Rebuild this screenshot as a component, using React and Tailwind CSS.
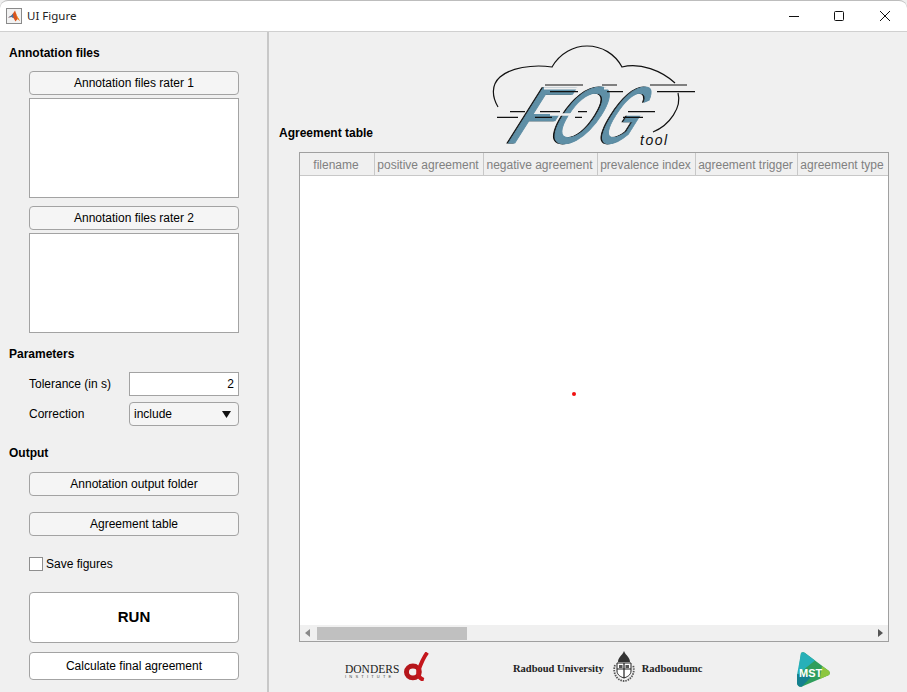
import React from "react";

const btn =
  "flex items-center justify-center w-[210px] ml-[29px] rounded-[4px] border border-[#a3a3a3] text-[12px] text-black";

const columns = [
  { name: "filename", w: "w-[75px]" },
  { name: "positive agreement", w: "w-[109px]" },
  { name: "negative agreement", w: "w-[114px]" },
  { name: "prevalence index", w: "w-[98px]" },
  { name: "agreement trigger", w: "w-[102px]" },
  { name: "agreement type", w: "flex-1" },
];

const MatlabIcon = () => (
  <svg width="16" height="16" viewBox="0 0 16 16">
    <rect x="0.5" y="0.5" width="15" height="15" fill="#f2f2f2" stroke="#8a8a8a" />
    <path d="M2 9.5 L5.5 7.5 L7 5.5 L9 2.5 L11 8 L14 13 L11.5 11 L9.5 13.5 L7.5 10 L5.5 9 Z" fill="#d9541e" />
    <path d="M2 9.5 L5.5 7.5 L7 5.5 L7.5 10 L5.5 9 Z" fill="#3b73a8" />
    <path d="M9 2.5 L11 8 L14 13 L11.5 11 Z" fill="#f09a2a" />
  </svg>
);

const WindowButtons = () => (
  <div className="flex items-center pr-[17px]">
    <svg width="10" height="10" viewBox="0 0 10 10">
      <path d="M0 5.5 H10" stroke="#111" strokeWidth="1" />
    </svg>
    <svg className="ml-[35px]" width="10" height="10" viewBox="0 0 10 10">
      <rect x="0.5" y="0.5" width="9" height="9" rx="1" fill="none" stroke="#111" />
    </svg>
    <svg className="ml-[36px]" width="10" height="10" viewBox="0 0 10 10">
      <path d="M0 0 L10 10 M10 0 L0 10" stroke="#111" strokeWidth="1" />
    </svg>
  </div>
);

const fogFont = '"Liberation Sans", sans-serif';

const FogLetter = ({ ch, sx, x }) => (
  <g fontFamily={fogFont} fontSize="80" strokeWidth="1.2">
    <text transform={`matrix(${sx} 0 -0.63 1 ${x - 1.4} 98)`} fill="#111" stroke="#111">
      {ch}
    </text>
    <text transform={`matrix(${sx} 0 -0.63 1 ${x} 98)`} fill="#5f8fa6" stroke="#5f8fa6">
      {ch}
    </text>
  </g>
);

const FogLogo = () => (
  <svg width="210" height="106" viewBox="0 0 210 106">
    <path
      d="M8 62 C2 52 1 40 10 32 C20 23 42 19 62 22 C70 8 84 1 97 1 C112 1 125 9 132 22 C150 17 172 26 185 38"
      fill="none"
      stroke="#111"
      strokeWidth="1.2"
    />
    <path d="M188 48 C192 62 180 80 163 87" fill="none" stroke="#111" strokeWidth="1.2" />
    <FogLetter ch="F" sx={0.85} x={13} />
    <FogLetter ch="O" sx={0.7} x={53} />
    <FogLetter ch="G" sx={0.55} x={102} />
    {/* bands where the speed lines cut through the letters */}
    <g stroke="#f0f0f0" strokeWidth="2.4">
      <path d="M54 43.4 H92 M114 43.4 H132 M60 69.5 H92 M90 69.5 H98 M134 69.5 H165" />
    </g>
    <g stroke="#111" strokeWidth="1.2">
      <path d="M55 40 H93 M60 46.7 H88 M112 40 H127 M117 46.7 H133 M160 40 H197 M167 46.7 H205" />
      <path d="M20 66.7 H35 M50 66.7 H70 M88 66.7 H97 M138 66.7 H165 M7 72.3 H28 M45 72.3 H62 M85 72.3 H92 M133 72.3 H153" />
    </g>
    <text x="150" y="100" fontSize="14" fontStyle="italic" letterSpacing="1.5" fontFamily={fogFont} fill="#111">
      tool
    </text>
  </svg>
);

const Crest = () => (
  <svg width="24" height="32" viewBox="0 0 24 32">
    <path d="M3 15 C0 24 6 31 12 31 C18 31 24 24 21 15" fill="none" stroke="#555" strokeWidth="1.8" strokeDasharray="1.5 1" />
    <path d="M5 13 H19 V21 C19 25 15 27 12 28 C9 27 5 25 5 21 Z" fill="#fff" stroke="#222" />
    <path d="M12 13 V28 M5 19 H19" stroke="#222" strokeWidth="1.2" />
    <path d="M6 12 C6 7 10 6 12 1 C14 6 18 7 18 12 Z" fill="#333" />
    <rect x="7" y="15" width="3.5" height="3" fill="#555" />
    <rect x="13.5" y="15" width="3.5" height="3" fill="#555" />
  </svg>
);

const DondersMark = () => (
  <svg width="26" height="29" viewBox="0 0 26 29">
    <ellipse cx="9" cy="20" rx="6.5" ry="6" fill="none" stroke="#b5161b" strokeWidth="5" />
    <path d="M23.5 0.5 C20 5 17 12 14.5 19 C14 24 16 27 20 28" fill="none" stroke="#c4161c" strokeWidth="4" />
  </svg>
);

const MstLogo = () => (
  <svg width="34" height="35" viewBox="0 0 34 35">
    <path d="M5 1 C6 0 8 0 9 1 L33 19 C34 20 34 22 33 23 L6 34.5 C3 35.5 1 33 1 31 Z" fill="#2f9e5c" />
    <path d="M5 1 C6 0 8 0 9 1 L19 8.5 L1 23 Z" fill="#27b0b8" />
    <path d="M1 22 L16 24 L6 34.5 C3 35.5 1 33 1 31 Z" fill="#14808f" />
    <path d="M26 14 L33 19 C34 20 34 22 33 23 L24 27 Z" fill="#8cc63f" />
    <text x="3" y="25" fontSize="11" fontWeight="700" fontFamily={fogFont} fill="#fff">
      MST
    </text>
  </svg>
);

const App = () => {
  return (
    <div
      className="w-[907px] h-[692px] overflow-hidden flex flex-col bg-[#f0f0f0] text-[12px] text-black"
      style={{ fontFamily: '"Liberation Sans", Arial, sans-serif' }}
    >
      {/* title bar */}
      <div className="h-[32px] shrink-0 flex items-center justify-between bg-white border-t border-b border-t-[#bdbdbd] border-b-[#d0d0d0] rounded-t-[8px]">
        <div className="flex items-center pl-[6px] gap-[5px]">
          <MatlabIcon />
          <span className="text-[11.5px] text-[#222]" style={{ fontFamily: '"Noto Sans", sans-serif' }}>
            UI Figure
          </span>
        </div>
        <WindowButtons />
      </div>

      <div className="flex flex-1 min-h-0">
        {/* left panel */}
        <div className="w-[267px] shrink-0 flex flex-col">
          <div className="h-[14px] mt-[14px] ml-[9px] font-bold leading-[14px]">Annotation files</div>
          <div className={`${btn} h-[24px] mt-[11px] bg-[#f5f5f5]`}>Annotation files rater 1</div>
          <div className="h-[100px] w-[210px] ml-[29px] mt-[3px] bg-white border border-[#a3a3a3]" />
          <div className={`${btn} h-[24px] mt-[8px] bg-[#f5f5f5]`}>Annotation files rater 2</div>
          <div className="h-[100px] w-[210px] ml-[29px] mt-[3px] bg-white border border-[#a3a3a3]" />

          <div className="h-[14px] mt-[14px] ml-[9px] font-bold leading-[14px]">Parameters</div>
          <div className="flex items-center h-[24px] mt-[11px] ml-[29px] w-[210px]">
            <span className="w-[100px]">Tolerance (in s)</span>
            <div className="w-[110px] h-full bg-white border border-[#a3a3a3] flex items-center justify-end pr-[4px]">
              2
            </div>
          </div>
          <div className="flex items-center h-[24px] mt-[6px] ml-[29px] w-[210px]">
            <span className="w-[100px]">Correction</span>
            <div className="w-[110px] h-full bg-[#f5f5f5] border border-[#a3a3a3] rounded-[4px] flex items-center justify-between pl-[4px] pr-[7px]">
              <span>include</span>
              <svg width="9" height="7" viewBox="0 0 9 7">
                <path d="M0 0 H9 L4.5 7 Z" fill="#111" />
              </svg>
            </div>
          </div>

          <div className="h-[14px] mt-[20px] ml-[9px] font-bold leading-[14px]">Output</div>
          <div className={`${btn} h-[24px] mt-[12px] bg-[#f5f5f5]`}>Annotation output folder</div>
          <div className={`${btn} h-[24px] mt-[16px] bg-[#f5f5f5]`}>Agreement table</div>

          <div className="flex items-center h-[14px] mt-[21px] ml-[29px]">
            <div className="w-[14px] h-[14px] bg-white border border-[#8f8f8f]" />
            <span className="ml-[3px]">Save figures</span>
          </div>

          <div className={`${btn} h-[51px] mt-[21px] bg-white text-[15px] font-bold`}>RUN</div>
          <div className={`${btn} h-[28px] mt-[9px] bg-white`}>Calculate final agreement</div>
        </div>

        {/* divider */}
        <div className="w-[2px] shrink-0 bg-[#c8c8c8]" />

        {/* right panel */}
        <div className="flex-1 min-w-0 flex flex-col">
          <div className="h-[120px] shrink-0 flex">
            <div className="w-[221px] shrink-0 flex items-end pl-[10px] pb-[12px] font-bold leading-[14px]">
              Agreement table
            </div>
            <div className="pt-[13px]">
              <FogLogo />
            </div>
          </div>

          <div className="relative w-[590px] h-[490px] ml-[30px] border border-[#a0a0a0] bg-white flex flex-col">
            <div className="flex h-[23px] shrink-0 bg-[#f0f0f0] border-b border-[#c8c8c8] text-[#808080]">
              {columns.map((col) => (
                <div
                  key={col.name}
                  className={`${col.w} flex items-center justify-center pt-[1px] pr-[2px] whitespace-nowrap border-r border-[#c8c8c8] last:border-r-0`}
                >
                  {col.name}
                </div>
              ))}
            </div>
            <div className="flex-1" />
            <div className="h-[16px] shrink-0 bg-[#f0f0f0] flex items-center justify-between px-[5px]">
              <svg width="5" height="8" viewBox="0 0 5 8">
                <path d="M5 0 V8 L0 4 Z" fill="#8a8a8a" />
              </svg>
              <div className="h-[13px] w-[150px] bg-[#c0c0c0] mr-auto ml-[7px]" />
              <svg width="5" height="8" viewBox="0 0 5 8">
                <path d="M0 0 V8 L5 4 Z" fill="#555" />
              </svg>
            </div>
            <div className="absolute left-[272px] top-[239px] w-[4px] h-[4px] rounded-full bg-[#f01010]" />
          </div>

          <div className="flex-1 flex items-center pt-[6px]">
            <div className="flex items-start ml-[76px] w-[85px] h-[29px] -mt-[7px]">
              <div className="w-[60px] flex flex-col items-start leading-none pt-[12px]">
                <span
                  className="text-[11.5px] leading-[10px] font-medium text-[#222]"
                  style={{ fontFamily: '"Liberation Serif", serif' }}
                >
                  DONDERS
                </span>
                <span className="text-[4px] leading-[5px] tracking-[3.2px] text-[#444]">INSTITUTE</span>
              </div>
              <DondersMark />
            </div>
            <span
              className="ml-[83px] mb-[2px] font-bold text-[10.5px] text-[#222] whitespace-nowrap"
              style={{ fontFamily: '"Liberation Serif", serif' }}
            >
              Radboud University
            </span>
            <div className="ml-[8px] -mt-[8px]">
              <Crest />
            </div>
            <span
              className="ml-[6px] mb-[2px] font-bold text-[10.5px] text-[#222]"
              style={{ fontFamily: '"Liberation Serif", serif' }}
            >
              Radboudumc
            </span>
            <div className="ml-[94px] -mt-[2px]">
              <MstLogo />
            </div>
          </div>
        </div>
      </div>
    </div>
  );
};

export default App;
